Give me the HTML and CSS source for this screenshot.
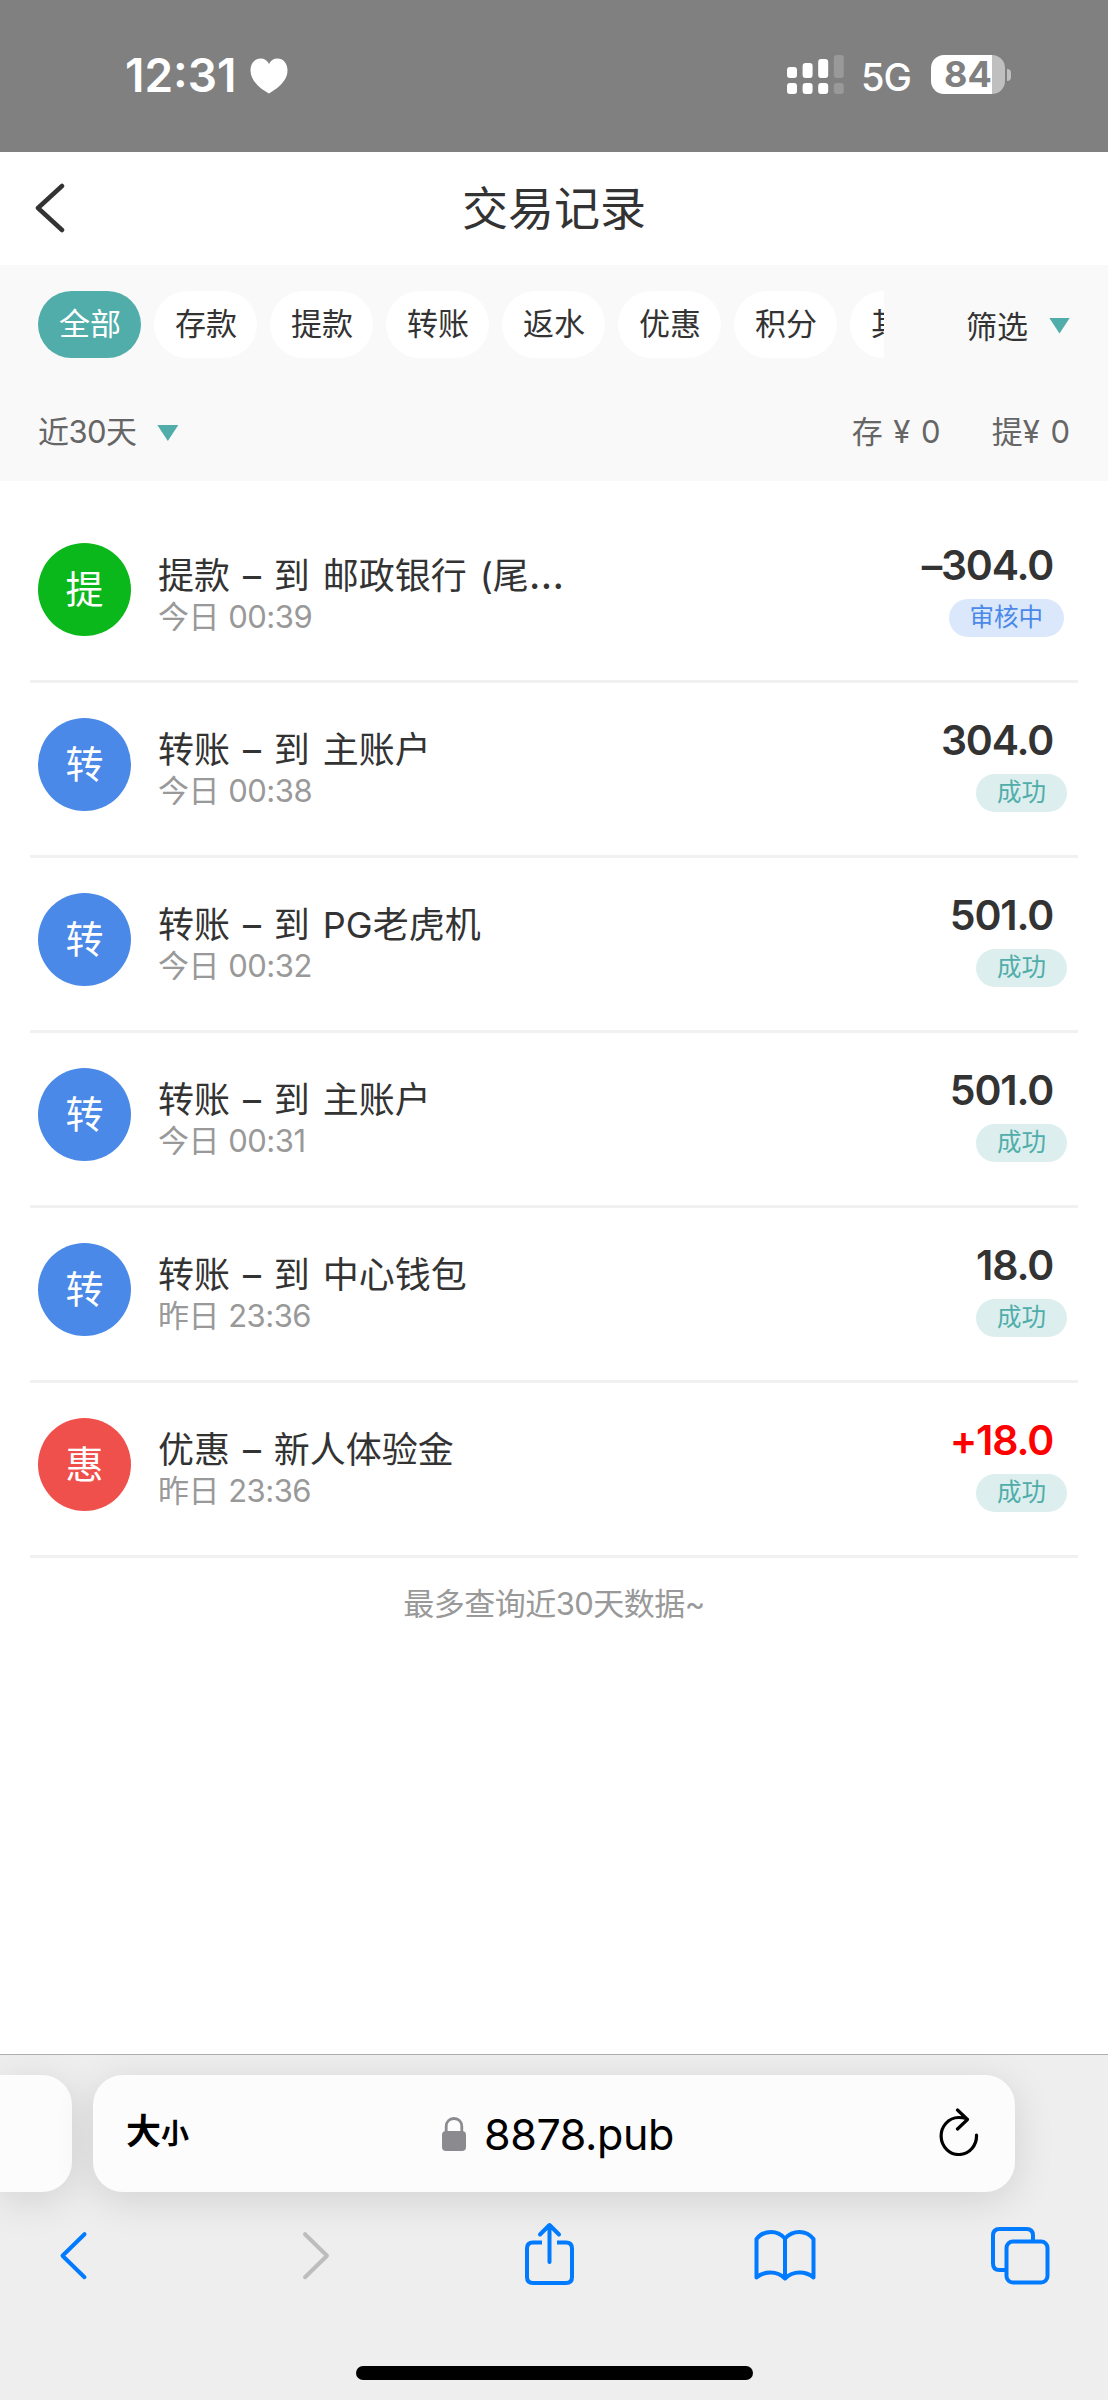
FILE: index.html
```html
<!DOCTYPE html>
<html lang="zh-CN">
<head>
  <meta charset="UTF-8">
  <title>交易记录</title>
  <link rel="stylesheet" href="styles.css">
</head>
<body>
  <div class="status-bar">
    <span class="time">12:31</span>
    <svg class="heart" width="38" height="36" viewBox="0 0 38 36">
      <path fill="#fff" d="M19 35.5C15 33 .5 25 .5 12.500C.5 5 5 .5 10.500 .5C14.500 .5 17.500 2.500 19 6C20.500 2.500 23.500 .5 27.500 .5C33 .5 37.500 5 37.500 12.500C37.500 25 23 33 19 35.500Z"/>
    </svg>
    <svg class="signal" width="57" height="39" viewBox="0 0 57 39">
      <g fill="#fff">
        <rect x="0" y="12" width="10" height="11" rx="3"/>
        <rect x="15.600" y="8" width="10" height="15" rx="3"/>
        <rect x="31.200" y="4" width="10" height="19" rx="3"/>
        <rect x="0" y="28" width="10" height="11" rx="3"/>
        <rect x="15.600" y="28" width="10" height="11" rx="3"/>
        <rect x="31.200" y="28" width="10" height="11" rx="3"/>
      </g>
      <g fill="#999">
        <rect x="46.800" y="0" width="10" height="23" rx="3"/>
        <rect x="46.800" y="28" width="10" height="11" rx="3"/>
      </g>
    </svg>
    <span class="network">5G</span>
    <div class="battery"><span>84</span></div>
    <div class="battery-tip"></div>
  </div>

  <div class="header">
    <svg class="back" width="30" height="50" viewBox="0 0 30 50">
      <path d="M27 3L3 25L27 47" fill="none" stroke="#333" stroke-width="4.500" stroke-linecap="round" stroke-linejoin="round"/>
    </svg>
    <h1>交易记录</h1>
  </div>

  <div class="filters">
    <div class="filter-row">
      <div class="chips">
        <span class="chip active">全部</span>
        <span class="chip">存款</span>
        <span class="chip">提款</span>
        <span class="chip">转账</span>
        <span class="chip">返水</span>
        <span class="chip">优惠</span>
        <span class="chip">积分</span>
        <span class="chip">其他</span>
      </div>
      <div class="filter-btn">筛选<i class="arrow"></i></div>
    </div>
    <div class="summary">
      <div class="range"><span>近30天</span><i class="arrow"></i></div>
      <div class="totals"><span>存 ¥ 0</span><span>提¥ 0</span></div>
    </div>
  </div>

  <div class="list">
    <div class="item">
      <div class="avatar green">提</div>
      <div class="info">
        <div class="name">提款 – 到 邮政银行 (尾<span class="dots">…</span></div>
        <div class="date">今日 00:39</div>
      </div>
      <div class="result">
        <div class="amount">–304.0</div>
        <div class="tag pending">审核中</div>
      </div>
    </div>
    <div class="item">
      <div class="avatar">转</div>
      <div class="info">
        <div class="name">转账 – 到 主账户</div>
        <div class="date">今日 00:38</div>
      </div>
      <div class="result">
        <div class="amount">304.0</div>
        <div class="tag">成功</div>
      </div>
    </div>
    <div class="item">
      <div class="avatar">转</div>
      <div class="info">
        <div class="name">转账 – 到 PG老虎机</div>
        <div class="date">今日 00:32</div>
      </div>
      <div class="result">
        <div class="amount">501.0</div>
        <div class="tag">成功</div>
      </div>
    </div>
    <div class="item">
      <div class="avatar">转</div>
      <div class="info">
        <div class="name">转账 – 到 主账户</div>
        <div class="date">今日 00:31</div>
      </div>
      <div class="result">
        <div class="amount">501.0</div>
        <div class="tag">成功</div>
      </div>
    </div>
    <div class="item">
      <div class="avatar">转</div>
      <div class="info">
        <div class="name">转账 – 到 中心钱包</div>
        <div class="date">昨日 23:36</div>
      </div>
      <div class="result">
        <div class="amount">18.0</div>
        <div class="tag">成功</div>
      </div>
    </div>
    <div class="item">
      <div class="avatar red">惠</div>
      <div class="info">
        <div class="name">优惠 – 新人体验金</div>
        <div class="date">昨日 23:36</div>
      </div>
      <div class="result">
        <div class="amount plus">+18.0</div>
        <div class="tag">成功</div>
      </div>
    </div>
    <p class="tip">最多查询近30天数据~</p>
  </div>

  <div class="browser">
    <div class="tabs">
      <div class="prev-tab"></div>
      <div class="address">
        <div class="text-size">大<small>小</small></div>
        <div class="url">
          <svg width="24" height="34" viewBox="0 0 24 34">
            <rect x="0" y="14" width="24" height="20" rx="4" fill="#8a8a8f"/>
            <path d="M4.200 15V9.500C4.200 4.500 7.500 1.500 12 1.500S19.800 4.500 19.800 9.500V15" fill="none" stroke="#8a8a8f" stroke-width="2.800"/>
          </svg>
          <span>8878.pub</span>
        </div>
        <svg class="reload" width="40" height="48" viewBox="0 0 40 48">
          <path d="M37.500 27A17.700 18.500 0 1 1 19.500 9.500C22 9.500 25 9.800 27 10.500M18.500 2L28.500 11.500L18.500 21" fill="none" stroke="#000" stroke-width="3.200" stroke-linecap="round" stroke-linejoin="round"/>
        </svg>
      </div>
    </div>
    <div class="toolbar">
      <svg width="64" height="68" viewBox="0 0 64 68">
        <path d="M42.500 14.200L20.500 35.700L42.500 57.200"/>
      </svg>
      <svg class="disabled" width="64" height="68" viewBox="0 0 64 68">
        <path d="M26 14.200L48 35.700L26 57.200"/>
      </svg>
      <svg width="64" height="68" viewBox="0 0 64 68">
        <path stroke-linecap="butt" d="M27 22.500H18Q12 22.500 12 28.500V57Q12 63 18 63H51Q57 63 57 57V28.500Q57 22.500 51 22.500H42"/>
        <path d="M34.500 42V5.500M25 14.500L34.500 5L44 14.500"/>
      </svg>
      <svg width="64" height="68" viewBox="0 0 64 68">
        <path d="M33 18.500C29 14 24 12 19 12S8 14.500 4.500 19V57.500C8 54.500 13 52.500 18.500 52.500S29 54.500 33 58.500C37 54.500 42 52.500 47.500 52.500S58 54.500 61.500 57.500V19C58 14.500 52.500 12 47.500 12S37 14 33 18.500ZM33 18.500V58"/>
      </svg>
      <svg width="64" height="68" viewBox="0 0 64 68">
        <path stroke-linecap="butt" d="M18 50H11.500Q5 50 5 43.500V15.500Q5 9 11.500 9H38.500Q45 9 45 15.500V21"/>
        <rect x="18.500" y="21.500" width="41" height="41" rx="6.500"/>
      </svg>
    </div>
    <div class="home-bar"></div>
  </div>
</body>
</html>
```
FILE: styles.css
```css
* {
  box-sizing: border-box;
}
body {
  margin: 0;
  width: 1108px;
  height: 2400px;
  display: flex;
  flex-direction: column;
  overflow: hidden;
  background: #fff;
  color: #333;
  font-family: Inter, "Noto Sans CJK SC", sans-serif;
  font-size: 31px;
}
svg {
  display: block;
  flex: none;
}

/* status bar */
.status-bar {
  height: 152px;
  flex: none;
  display: flex;
  align-items: center;
  padding: 0 97px 3px 125px;
  background: #808080;
  color: #fff;
}
.time {
  width: 125px;
  font-size: 46px;
  font-weight: 600;
}
.heart {
  margin-top: 3px;
}
.signal {
  margin-left: auto;
}
.network {
  width: 51px;
  margin: 4px 19px 0 17px;
  font-size: 38px;
  font-weight: 500;
  letter-spacing: -1px;
}
.battery {
  width: 74px;
  height: 39px;
  border-radius: 13px;
  background: linear-gradient(to right, #fff 61px, #bfbfbf 61px);
  color: #808080;
  font-size: 36px;
  font-weight: 700;
  line-height: 39px;
  text-align: center;
}
.battery-tip {
  width: 4px;
  height: 12px;
  margin-left: 2px;
  border-radius: 0 4px 4px 0;
  background: #bfbfbf;
}

/* title */
.header {
  height: 113px;
  flex: none;
  display: grid;
  grid-template-columns: 30px 1fr 30px;
  align-items: center;
  padding: 0 35px 2px;
}
.header h1 {
  margin: 0;
  font-size: 46px;
  font-weight: 400;
  line-height: 58px;
  text-align: center;
}

/* filters */
.filters {
  height: 216px;
  flex: none;
  padding: 26px 38px 0;
  background: #f9f9f9;
}
.filter-row {
  display: flex;
  align-items: center;
  justify-content: space-between;
}
.chips {
  width: 846px;
  display: flex;
  gap: 13px;
  overflow: hidden;
}
.chip {
  width: 103px;
  height: 67px;
  flex: none;
  padding-left: 1px;
  border-radius: 34px;
  background: #fff;
  line-height: 65px;
  text-align: center;
}
.chip.active {
  background: #50adaa;
  color: #fff;
}
.filter-btn,
.range {
  display: flex;
  align-items: center;
  gap: 21px;
}
.arrow {
  width: 21px;
  height: 16px;
  margin-top: 2px;
  background: #50adaa;
  clip-path: polygon(0 0, 100% 0, 50% 100%);
}
.summary {
  display: flex;
  align-items: center;
  justify-content: space-between;
  height: 60px;
  margin-top: 44px;
  color: #666;
}
.summary span {
  padding-bottom: 5px;
}
.range {
  letter-spacing: -0.6px;
}
.totals {
  display: flex;
  gap: 51px;
  word-spacing: 2px;
}

/* records */
.list {
  flex: 1;
  padding: 27px 30px 0;
}
.item {
  height: 175px;
  display: flex;
  padding: 35px 0 0 8px;
  border-bottom: 3px solid #f1f1f1;
}
.avatar {
  width: 93px;
  height: 93px;
  border-radius: 50%;
  background: #4a89e8;
  color: #fff;
  font-size: 38px;
  line-height: 92px;
  text-align: center;
}
.avatar.green {
  background: #0bb81b;
}
.avatar.red {
  background: #ef504c;
}
.info {
  flex: 1;
  padding: 11px 0 0 27px;
}
.name {
  font-size: 36px;
  line-height: 42px;
  word-spacing: 2.8px;
}
.dots {
  font-size: 41px;
  line-height: 1;
}
.date {
  color: #999;
  line-height: 40px;
  letter-spacing: -0.5px;
  word-spacing: 1px;
}
.result {
  display: flex;
  flex-direction: column;
  align-items: flex-end;
  padding-right: 11px;
}
.amount {
  margin-right: 14px;
  font-size: 41px;
  font-weight: 600;
  line-height: 44px;
  letter-spacing: -1.2px;
}
.amount.plus {
  color: #f00;
}
.tag {
  height: 38px;
  margin-top: 12px;
  padding: 0 21px;
  border-radius: 19px;
  background: #dceeed;
  color: #50adaa;
  font-size: 24.5px;
  line-height: 37px;
}
.tag.pending {
  margin-right: 3px;
  background: #dbe7fb;
  color: #4a89e8;
}
.tip {
  margin: 25px 0 0;
  color: #999;
  line-height: 42px;
  letter-spacing: -0.5px;
  text-align: center;
}

/* safari bottom bar */
.browser {
  height: 346px;
  flex: none;
  border-top: 1px solid #b0b0b0;
  background: #eee;
}
.tabs {
  display: flex;
  gap: 21px;
  padding-top: 20px;
}
.prev-tab,
.address {
  height: 117px;
  background: #fcfcfc;
  box-shadow: 0 8px 40px rgba(0, 0, 0, 0.12);
}
.prev-tab {
  width: 72px;
  border-radius: 0 30px 30px 0;
}
.address {
  width: 922px;
  display: flex;
  align-items: center;
  justify-content: space-between;
  padding: 0 36px 0 33px;
  border-radius: 30px;
  color: #000;
}
.text-size {
  width: 70px;
  font-size: 35px;
  font-weight: 700;
  line-height: 44px;
  padding-bottom: 3px;
}
.text-size small {
  font-size: 28px;
}
.url {
  display: flex;
  align-items: center;
  gap: 18px;
  margin-right: 19px;
  font-size: 43px;
  letter-spacing: -0.4px;
}
.reload {
  margin-top: -4px;
}
.toolbar {
  display: flex;
  justify-content: space-between;
  padding: 28px 56px 0 42px;
}
.toolbar svg {
  fill: none;
  stroke: #007aff;
  stroke-width: 4;
  stroke-linecap: round;
  stroke-linejoin: round;
}
.toolbar .disabled {
  stroke: #bdbdbd;
}
.home-bar {
  width: 397px;
  height: 14px;
  margin: 78px auto 0;
  border-radius: 7px;
  background: #000;
}
```
